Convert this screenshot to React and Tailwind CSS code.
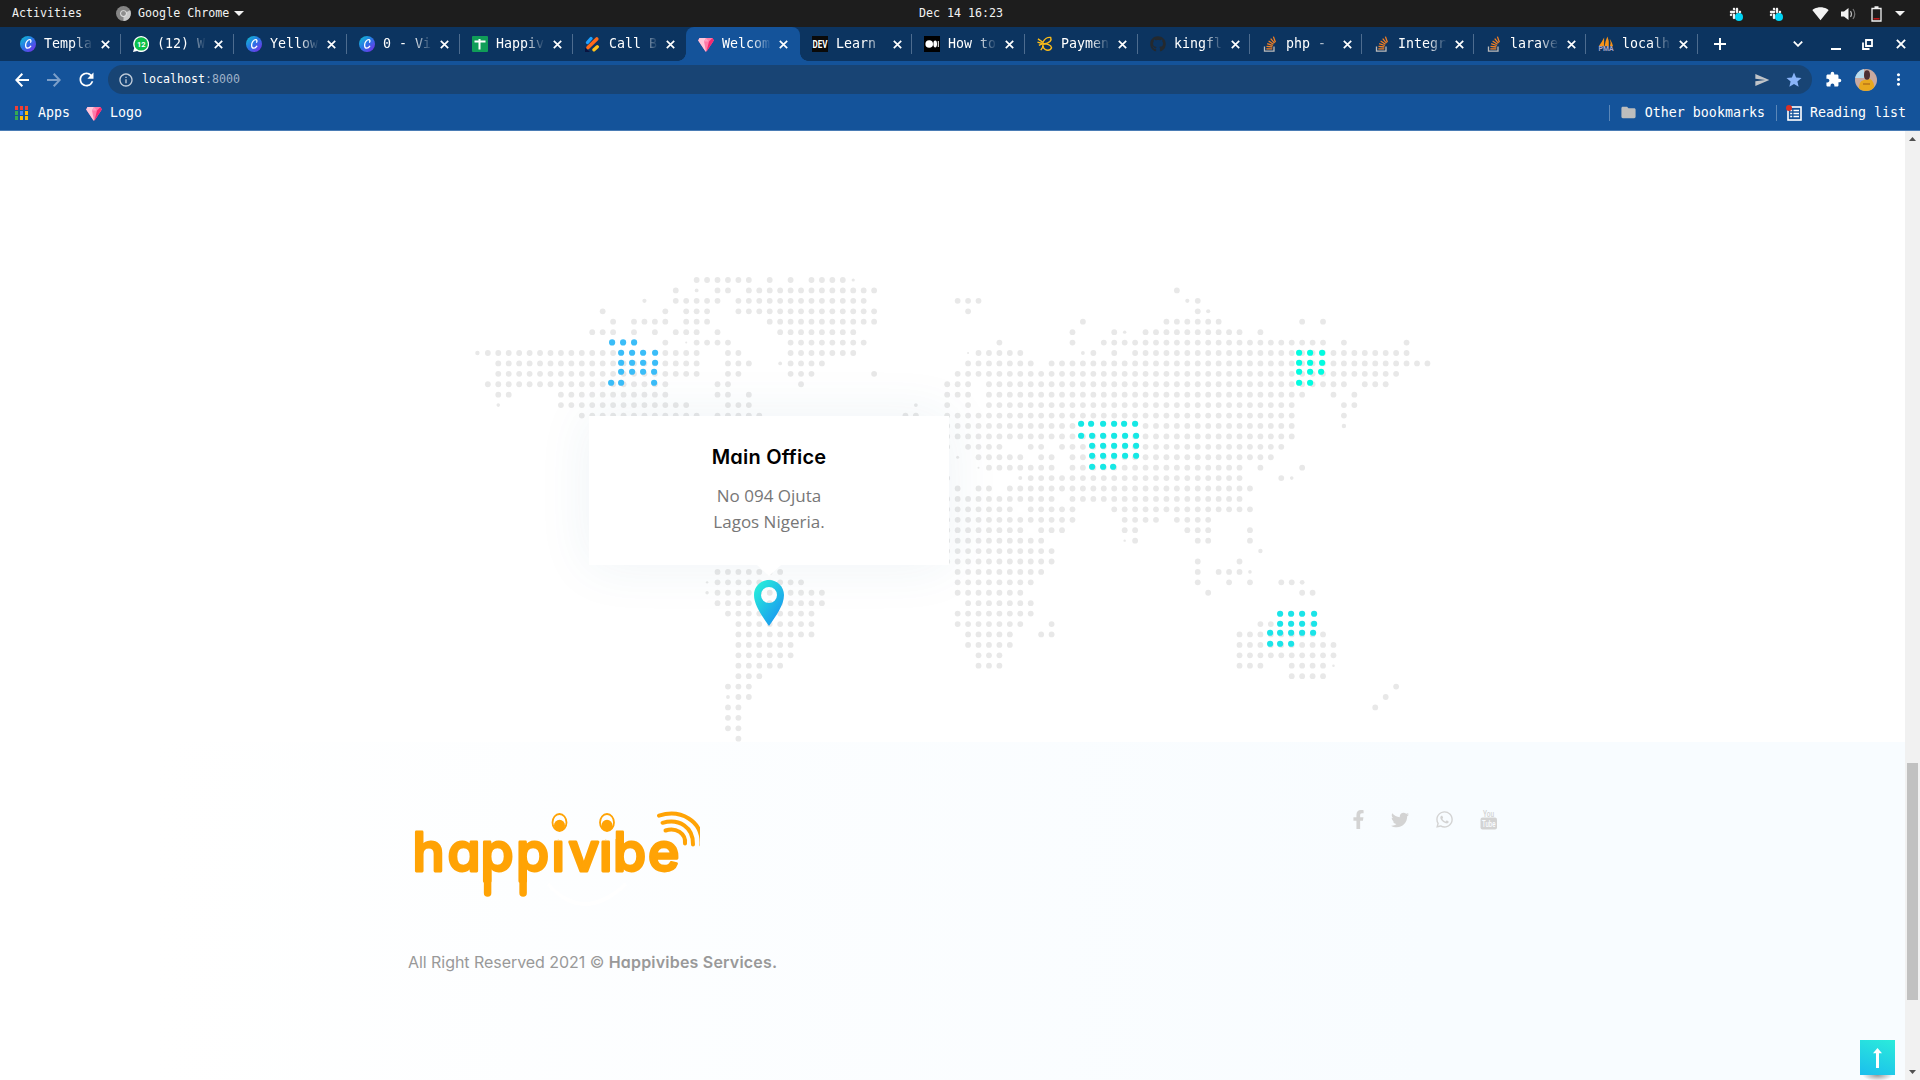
import React from "react";
import { FaFacebookF, FaTwitter, FaWhatsapp, FaGithub, FaSlack } from "react-icons/fa";
import { MdRefresh, MdInfoOutline, MdSend, MdStar, MdExtension, MdMoreVert, MdFolder, MdSignalWifi4Bar } from "react-icons/md";

const MONO = "font-['DejaVu_Sans_Mono',monospace]";

/* ---------- small line icons ---------- */
const Cross = ({ size = 9, className = "" }) => (
  <svg width={size} height={size} viewBox="0 0 9 9" className={`shrink-0 ${className}`} fill="none" stroke="#fff" strokeWidth="1.700">
    <path d="M0.800 0.800L8.200 8.200M8.200 0.800L0.800 8.200" />
  </svg>
);
const Arrow = ({ flip, color, className = "" }) => (
  <svg width="14" height="14" viewBox="0 0 14 14" className={`shrink-0 ${flip ? "-scale-x-100" : ""} ${className}`} fill="none" stroke={color} strokeWidth="2">
    <path d="M7.300 0.700L1.300 7l6 6.300M1.300 7H14" />
  </svg>
);

/* ---------- favicons ---------- */
const Canva = () => (
  <svg width="16" height="16" viewBox="0 0 16 16">
    <defs>
      <linearGradient id="canva" x1="0" y1="0" x2="0.9" y2="1">
        <stop offset="0" stopColor="#0cc7cf" />
        <stop offset="0.5" stopColor="#2a74e6" />
        <stop offset="1" stopColor="#7b2be8" />
      </linearGradient>
    </defs>
    <circle cx="8" cy="8" r="8" fill="url(#canva)" />
    <path d="M10.6 6.2c.6-1 .5-2.500-.8-2.500C7.700 3.700 5.600 6.500 5.600 9.200c0 1.900.9 3 2.200 3 1.300 0 2.300-.9 3-2" fill="none" stroke="#fff" strokeWidth="1.300" strokeLinecap="round" />
  </svg>
);
const Whats = () => (
  <svg width="16" height="16" viewBox="0 0 16 16">
    <path d="M0 16l1.200-4A8 8 0 1 1 4.200 15z" fill="#fff" />
    <circle cx="8.200" cy="7.900" r="6.700" fill="#0cc04a" />
    <text x="8.200" y="10.700" textAnchor="middle" fontSize="7.500" fontWeight="700" fill="#fff" fontFamily="Roboto, sans-serif">12</text>
  </svg>
);
const Sheets = () => (
  <svg width="16" height="16" viewBox="0 0 16 16">
    <rect width="16" height="16" rx="1" fill="#109d58" />
    <path d="M2.500 5.500h11M7.500 3v10.500" stroke="#fff" strokeWidth="2" />
  </svg>
);
const Slants = () => (
  <svg width="16" height="16" viewBox="0 0 16 16" strokeLinecap="round" fill="none">
    <path d="M0 11.500L5 16H0z" fill="#0a1440" />
    <path d="M2.500 6.500L6 2.500" stroke="#1ea0ff" strokeWidth="3.400" />
    <path d="M3 11.500L11.800 3" stroke="#ff6a1a" strokeWidth="3.600" />
    <path d="M9 13.800l3.300-3" stroke="#ffc21a" strokeWidth="3.400" />
  </svg>
);
const Gem = () => (
  <svg width="16" height="16" viewBox="0 0 16 16">
    <path d="M1.500 2h13l1.300 2.500L8.500 15.500h-1L.2 4.500z" fill="#ff7aa8" />
    <path d="M1.500 2H8L6 5.500 8 15.500h-.5L.2 4.500z" fill="#ffc6da" />
    <path d="M8 2L6 5.500h5z" fill="#ff9dc0" />
    <path d="M14.500 2l1.300 2.500L8.500 15.500 11 5.500z" fill="#f5296f" />
  </svg>
);
const Dev = () => (
  <svg width="16" height="16" viewBox="0 0 16 16">
    <rect width="16" height="16" fill="#0a0a0a" />
    <text x="8" y="11.600" textAnchor="middle" textLength="15" lengthAdjust="spacingAndGlyphs" fontSize="10" fontWeight="700" fill="#fff" fontFamily="Roboto, sans-serif">DEV</text>
  </svg>
);
const Medium = () => (
  <svg width="16" height="16" viewBox="0 0 16 16">
    <rect width="16" height="16" fill="#000" />
    <circle cx="5.200" cy="8" r="3.800" fill="#fff" />
    <ellipse cx="11.200" cy="8" rx="1.800" ry="3.400" fill="#fff" />
    <path d="M14.300 5v6" stroke="#fff" strokeWidth="1" />
  </svg>
);
const Bee = () => (
  <svg width="17" height="16" viewBox="0 0 17 16" fill="none" stroke="#fbbc1a" strokeWidth="1.500">
    <path d="M1 2.500l5 3.500M.5 6l5 1.500M4 14.500L7 10" />
    <path d="M6 7c1.500-4 5-6.500 8.500-6 1.500 3-1 6.500-7.500 7z" />
    <path d="M6.500 8c4-.5 8.500 1 9 4-1.500 3.500-6 4-9.500-1z" />
    <path d="M2 9.500l4-2" />
  </svg>
);
const Git = () => <FaGithub size={16} color="#24292e" />;
const Stack = () => (
  <svg width="16" height="16" viewBox="0 0 16 16" fill="none">
    <path d="M2.500 10.500v4.700h9.500v-4.700" stroke="#bcbbbb" strokeWidth="1.300" />
    <path d="M4.300 12.800h6M4.500 10.300l5.900.7M5.200 7.600l5.600 1.900M6.600 5l4.900 3.300M8.700 2.700l3.800 4.500M11.400.6l2 5.600" stroke="#f48024" strokeWidth="1.300" />
  </svg>
);
const Pma = () => (
  <svg width="17" height="16" viewBox="0 0 17 16">
    <path d="M6.500 1Q4 6 .8 10.500h5.700zM10 0Q7.500 5 7 10.500h4.500Q12 4 10 0zM12.500 2.500q1.500 4 .2 8h3.300q-1-4-3.500-8z" fill="#f7931a" />
    <text x="8.500" y="15.800" textAnchor="middle" textLength="16" lengthAdjust="spacingAndGlyphs" fontSize="7" fontWeight="700" fill="#a9a5cc" fontFamily="Roboto, sans-serif">PMA</text>
  </svg>
);

const TABS = [
  { t: "Templa", I: Canva, w: "w-[113px]" },
  { t: "(12) W", I: Whats, w: "w-[113px]" },
  { t: "Yellow", I: Canva, w: "w-[113px]" },
  { t: "0 - Vi", I: Canva, w: "w-[113px]" },
  { t: "Happiv", I: Sheets, w: "w-[113px]" },
  { t: "Call B", I: Slants, w: "w-[113px]", bare: true },
  { t: "Welcom", I: Gem, w: "w-[114px]", active: true, bare: true },
  { t: "Learn ", I: Dev, w: "w-[112px]" },
  { t: "How to", I: Medium, w: "w-[113px]" },
  { t: "Paymen", I: Bee, w: "w-[113px]" },
  { t: "kingfl", I: Git, w: "w-[112px]" },
  { t: "php - ", I: Stack, w: "w-[112px]" },
  { t: "Integr", I: Stack, w: "w-[112px]" },
  { t: "larave", I: Stack, w: "w-[112px]" },
  { t: "localh", I: Pma, w: "w-[112px]" },
];

function Tab({ t, I, w, active, bare }) {
  return (
    <div className={`relative flex h-[34px] shrink-0 items-center pl-3 ${w} ${active ? "rounded-t-lg bg-[#14539a]" : ""}`}>
      {active && <span className="absolute bottom-0 -left-2 size-2 bg-[radial-gradient(circle_at_0_0,#0c3460_7.5px,#14539a_8px)]" />}
      {active && <span className="absolute bottom-0 -right-2 size-2 bg-[radial-gradient(circle_at_100%_0,#0c3460_7.5px,#14539a_8px)]" />}
      <span className="flex w-4 shrink-0 justify-center"><I /></span>
      <span className="ml-2 w-[49px] shrink-0 whitespace-pre text-[13.3px] leading-5 text-white [mask-image:linear-gradient(to_right,#000_60%,transparent_100%)]">{t}</span>
      <Cross className="ml-[8px]" />
      {!bare && <span className="absolute right-0 top-[7px] h-5 w-px bg-[#4d6c8f]" />}
    </div>
  );
}

function Tray() {
  return (
    <div className="flex h-[27px] w-full items-center justify-end pr-[15px] text-[#f2f2f2]">
      {[0, 1].map((k) => (
        <span key={k} className="relative mr-[26px] h-[14px] w-[14px]">
          <FaSlack size={13} />
          <span className="absolute left-[6px] top-[6px] size-2 rounded-full bg-[#00d4f5]" />
        </span>
      ))}
      <MdSignalWifi4Bar size={17} className="ml-[3px] mr-[12px]" />
      <svg width="16" height="14" viewBox="0 0 16 14" className="mr-[14px]" fill="none">
        <path d="M0 4.500h3L7.500 1v12L3 9.500H0z" fill="#f2f2f2" />
        <path d="M9.500 4q2 3 0 6" stroke="#bbb" strokeWidth="1.200" />
        <path d="M12 2q3.500 5 0 10" stroke="#777" strokeWidth="1.200" />
      </svg>
      <svg width="11" height="16" viewBox="0 0 11 16" className="mr-[13px]" fill="none">
        <path d="M1 2.500h9v12.500H1zM3.500 1h4" stroke="#f2f2f2" strokeWidth="1.300" />
        <path d="M2.500 12.800h6" stroke="#d01818" strokeWidth="1.400" />
      </svg>
      <svg width="10" height="5" viewBox="0 0 10 5"><path d="M0 0h10L5 5z" fill="#f2f2f2" /></svg>
    </div>
  );
}

/* ---------- dotted world map ---------- */
/* each row: inclusive column runs */
const ROWS = [
  [[21, 26], [28], [30], [32, 35]],
  [[19], [23, 24], [26, 38], [67]],
  [[19, 23], [25, 37], [46, 48], [69]],
  [[12], [18], [20, 22], [25, 38], [47], [69]],
  [[13], [15, 18], [20, 22], [28, 38], [58], [66, 71], [79], [81]],
  [[11, 13], [15], [17], [19, 21], [23], [29, 36], [57], [61], [64, 73], [75]],
  [[18], [21, 24], [30, 37], [50], [57], [60, 81], [83], [89]],
  [[1, 13], [18, 21], [24, 25], [30, 36], [48, 52], [59], [61], [63, 89]],
  [[2, 21], [24, 26], [30, 33], [47, 53], [55, 91]],
  [[2, 21], [24, 25], [30, 32], [38], [46, 88]],
  [[1, 18], [23, 24], [31], [45, 47], [49, 83], [85, 87]],
  [[2, 3], [8, 18], [23, 24], [26], [45, 47], [49, 79], [82], [84]],
  [[8, 20], [24, 26], [45], [47], [49, 78], [83, 84]],
  [[10, 21], [23, 27], [41, 42], [45, 78], [83]],
  [[45, 57], [64, 78]],
  [[45, 78]],
  [[45], [47, 50], [53, 54], [56, 77]],
  [[48, 52], [54, 55], [57, 76]],
  [[49, 55], [57, 73], [75], [79]],
  [[45], [53, 73], [77]],
  [[46], [48, 49], [51, 74]],
  [[45, 55], [57, 73]],
  [[45, 51], [53, 57], [61, 74]],
  [[45, 57], [62, 65], [67, 70]],
  [[45, 52], [54, 56], [62, 63], [68, 70], [74]],
  [[45, 54], [63], [69, 70], [74]],
  [[45, 55]],
  [[45, 55], [69], [73]],
  [[23, 29], [46, 54], [69], [71, 73]],
  [[23, 31], [46, 53], [69], [72], [74], [77, 78]],
  [[23, 33], [46, 52], [70], [79, 80]],
  [[23, 33], [47, 53]],
  [[24, 32], [46, 53]],
  [[25, 32], [46, 52], [55], [75, 76], [80]],
  [[25, 32], [47, 51], [54, 55], [73, 81]],
  [[25, 30], [47, 51], [73, 82]],
  [[25, 30], [48, 50], [73, 82]],
  [[25, 29], [48, 50], [73, 75], [78, 81]],
  [[25, 27], [78, 81]],
  [[24, 26], [88]],
  [[25, 26], [87]],
  [[24, 25], [86]],
  [[24, 25]],
  [[24, 25]],
  [[25]],
];
/* small dots: [column, row, radius] */
const SMALL = [
  [36, 0, 1.6], [21, 1, 1.9], [16, 2, 2.1], [68, 2, 2.1], [70, 3, 2.1], [62, 5, 1.7], [20, 6, 1], [0, 7, 2.2],
  [47, 7, 1], [58, 7, 1.9], [29, 8, 1.9], [2, 12, 1.8], [42, 12, 1.9], [83, 14, 2.2], [46, 17, 1.5], [48, 18, 1],
  [52, 19, 2], [78, 19, 1.8], [62, 25, 1.2], [75, 26, 2.2], [74, 28, 1.8], [22, 29, 1.2], [79, 29, 2.4],
  [22, 30, 1.7], [82, 37, 1.3], [24, 40, 1.9],
];
const PX = 10.44, PY = 10.425, X0 = 477.4, Y0 = 149;

const GROUPS = [
  { c: "#3bbdf8", ox: 460, oy: 129, rows: [[247, [456, 489, 522]], [278, [483, 516, 549, 585]], [308, [483, 516, 549, 585]], [335, [483, 516, 549, 582]], [368, [453, 483, 582]]] },
  { c: "#16e8e5", ox: 880, oy: 129, rows: [[491, [603, 633, 669, 702, 732, 765]], [527, [603, 636, 669, 702, 735, 768]], [557, [636, 669, 702, 735, 768]], [587, [636, 669, 702, 735, 768]], [620, [636, 669, 699]]] },
  { c: "#02fce0", ox: 1160, oy: 139, rows: [[248, [417, 450, 486]], [278, [417, 450, 486]], [305, [417, 450, 483]], [338, [417, 450]]] },
  { c: "#1be4e8", ox: 1160, oy: 409, rows: [[221, [360, 393, 426, 462]], [251, [360, 393, 426, 462]], [278, [330, 360, 393, 426, 459]], [311, [330, 360, 393]]] },
];

function WorldMap() {
  const dots = [];
  ROWS.forEach((runs, r) =>
    runs.forEach(([a, b = a]) => {
      for (let c = a; c <= b; c++) dots.push([c, r, 2.9]);
    })
  );
  return (
    <svg className="block" width="1905" height="611" viewBox="0 0 1905 611">
      <g fill="#e8e8e8">
        {dots.concat(SMALL).map(([c, r, s]) => (
          <circle key={`${c}-${r}`} cx={X0 + c * PX} cy={Y0 + r * PY} r={s} />
        ))}
      </g>
      {GROUPS.map((g) => (
        <g key={g.c} fill={g.c}>
          {g.rows.map(([y, xs]) => xs.map((x) => <circle key={`${x}-${y}`} cx={g.ox + x / 3 + 0.1} cy={g.oy + y / 3 + 0.1} r="3.1" />))}
        </g>
      ))}
    </svg>
  );
}

function Pin() {
  return (
    <svg width="30" height="46" viewBox="0 0 30 46">
      <defs>
        <linearGradient id="pin" x1="0.1" y1="0.1" x2="0.8" y2="0.9">
          <stop offset="0" stopColor="#27ecdb" />
          <stop offset="1" stopColor="#1a98f0" />
        </linearGradient>
      </defs>
      <path fill="url(#pin)" fillRule="evenodd" d="M15 0C6.700 0 0 6.700 0 15c0 10 8 21 15 31 7-10 15-21 15-31C30 6.700 23.300 0 15 0zM15 7a8 8 0 1 1 0 16 8 8 0 0 1 0-16z" />
    </svg>
  );
}

function Logo() {
  return (
    <svg width="300" height="100" viewBox="0 0 300 100" className="-ml-[8px] block">
      <defs>
        <mask id="stems" maskUnits="userSpaceOnUse" x="0" y="0" width="300" height="100">
          <rect width="300" height="100" fill="#fff" />
          <rect x="147" y="0" width="24" height="28" fill="#000" />
          <rect x="198" y="0" width="17.500" height="28" fill="#000" />
        </mask>
      </defs>
      <text
        x="12.500 47.500 80.500 116 151.500 168.500 199 213 248" y="59.800" mask="url(#stems)"
        fill="#ffa305" stroke="#ffa305" strokeWidth="2.800" strokeLinejoin="round"
        fontSize="53.500" fontWeight="500" fontFamily="Inter, sans-serif" style={{ fontFeatureSettings: '"cv11"' }}
      >happivibe</text>
      <path d="M87.600 60V82M123.100 60V82" stroke="#ffa305" strokeWidth="7.500" strokeLinecap="round" />
      {[159.5, 207].map((x) => (
        <g key={x}>
          <ellipse cx={x} cy="11.500" rx="7" ry="8.500" fill="none" stroke="#ffa305" strokeWidth="1.800" />
          <ellipse cx={x} cy="14.500" rx="5.500" ry="5.800" fill="#ffa305" />
        </g>
      ))}
      <g fill="none" stroke="#ffa305" strokeWidth="4" strokeLinecap="round">
        <path d="M259 4.700C280-2 303 9 301.500 34" />
        <path d="M262.500 11.800C279 7 293.500 16 293 33.500" />
        <path d="M265.500 19.500C276 16 286 22.500 285 32.500" />
      </g>
      <path d="M148 73q35 40 78 0" fill="none" stroke="#fff" strokeWidth="4" />
    </svg>
  );
}

function YouTube() {
  return (
    <svg width="18" height="21" viewBox="0 0 18 21">
      <text x="8.500" y="7.500" textAnchor="middle" textLength="11" lengthAdjust="spacingAndGlyphs" fontSize="9.500" fontWeight="500" fill="#d3d3d3" fontFamily="Roboto, sans-serif">You</text>
      <rect x="0.500" y="8.500" width="16.500" height="12" rx="2" fill="#d3d3d3" />
      <text x="8.800" y="18" textAnchor="middle" textLength="13.500" lengthAdjust="spacingAndGlyphs" fontSize="9.500" fontWeight="500" fill="#f9fcff" fontFamily="Roboto, sans-serif">Tube</text>
    </svg>
  );
}

export default function App() {
  return (
    <div className={`flex h-[1080px] w-[1920px] flex-col overflow-hidden bg-white ${MONO}`}>
      {/* desktop bar */}
      <div className="grid h-[27px] shrink-0 grid-cols-3 items-center bg-[#1d1d1d] text-[11.65px] text-[#f2f2f2]">
        <div className="flex items-center pl-3">
          <span>Activities</span>
          <svg width="15" height="15" viewBox="0 0 16 16" className="ml-[34px] mr-[7px]">
            <circle cx="8" cy="8" r="8" fill="#858585" />
            <path d="M8 8L15 4.500A8 8 0 0 1 8 16z" fill="#c9c9c9" />
            <circle cx="8" cy="8" r="3.600" fill="#e0e0e0" />
            <circle cx="8" cy="8" r="2.600" fill="#8e8e8e" />
          </svg>
          <span>Google Chrome</span>
          <svg width="10" height="5" viewBox="0 0 10 5" className="ml-[5px]"><path d="M0 0h10L5 5z" fill="#f2f2f2" /></svg>
        </div>
        <span className="pl-[2px] text-center">Dec 14 16:23</span>
        <Tray />
      </div>

      {/* tab strip */}
      <div className="flex h-[34px] shrink-0 items-center bg-[#0c3460] pl-2 text-white">
        {TABS.map((t, i) => <Tab key={i} {...t} />)}
        <svg width="12" height="12" viewBox="0 0 12 12" className="ml-[16px] shrink-0" stroke="#fff" strokeWidth="2"><path d="M6 0v12M0 6h12" /></svg>
        <svg width="10" height="6" viewBox="0 0 10 6" className="ml-[67px] shrink-0" fill="none" stroke="#fff" strokeWidth="1.800"><path d="M0.800 0.600L5 4.800 9.200 0.600" /></svg>
        <span className="ml-[28px] mt-[9px] h-[2px] w-[10px] bg-white" />
        <svg width="11" height="11" viewBox="0 0 11 11" className="ml-[21px]" fill="none" stroke="#fff" strokeWidth="1.800">
          <path d="M4 1h6v6H4zM1 3.500V10h6.500" />
        </svg>
        <Cross size={10} className="ml-[23px]" />
      </div>

      {/* toolbar */}
      <div className="flex h-[37px] shrink-0 items-center bg-[#14539a] pl-[15px] text-white">
        <Arrow color="#fff" />
        <Arrow flip color="#7c9fc9" className="ml-[18px]" />
        <MdRefresh size={21} className="ml-[15px]" />
        <div className="ml-[11px] flex h-[29px] w-[1704px] items-center rounded-full bg-[#184474] pl-[10px] pr-[9px]">
          <MdInfoOutline size={16} className="text-[#c3cedb]" />
          <span className="ml-2 text-[11.65px] text-white">localhost<span className="text-[#9fb2c8]">:8000</span></span>
          <MdSend size={16} className="ml-auto mr-[15px] text-[#c0c4c8]" />
          <MdStar size={18} className="text-[#8ab4f8]" />
        </div>
        <MdExtension size={17} className="ml-[13px]" />
        <svg width="22" height="22" viewBox="0 0 22 22" className="ml-[13px]">
          <defs><clipPath id="av"><circle cx="11" cy="11" r="11" /></clipPath></defs>
          <g clipPath="url(#av)">
            <rect width="22" height="22" fill="#c9a9a0" />
            <path d="M0 0h9v9H0z" fill="#b8dcef" />
            <path d="M4 22q-1-10 5-11l6-1q5 2 4 12z" fill="#e8a81e" />
            <ellipse cx="12" cy="6" rx="3" ry="4.800" fill="#4c3033" />
            <path d="M8 15h7" stroke="#b87418" strokeWidth="1.500" />
          </g>
        </svg>
        <MdMoreVert size={19} className="ml-[12px]" />
      </div>

      {/* bookmarks */}
      <div className="flex h-[33px] shrink-0 items-center border-b border-[#4a7cb5] bg-[#14539a] pb-[3px] pl-[15px] text-[13.3px] text-white">
        <div className="grid grid-cols-3 gap-x-[2px] gap-y-px">
          {["bg-[#ee4035]", "bg-[#ee4035]", "bg-[#ee4035]", "bg-[#35a853]", "bg-[#4285f4]", "bg-[#fbbc05]", "bg-[#35a853]", "bg-[#fbbc05]", "bg-[#fbbc05]"].map((c, i) => (
            <span key={i} className={`h-[4px] w-[3px] ${c}`} />
          ))}
        </div>
        <span className="ml-[10px] mr-4">Apps</span>
        <Gem />
        <span className="ml-2">Logo</span>
        <span className="ml-auto h-4 w-px bg-[#5b87b8]" />
        <MdFolder size={17} className="ml-[10px] text-[#bdbdbd]" />
        <span className="ml-2 mr-[11px]">Other bookmarks</span>
        <span className="h-4 w-px bg-[#5b87b8]" />
        <svg width="16" height="16" viewBox="0 0 16 16" className="ml-[9px]" fill="none" stroke="#fff">
          <rect x="2" y="2" width="13" height="13" strokeWidth="1.600" />
          <path d="M4.200 5.500h2M4.200 8.500h2M4.200 11.500h2M7.500 5.500H13M7.500 8.500H13M7.500 11.500H13" strokeWidth="1.500" />
          <circle cx="3" cy="3" r="3" fill="#d93025" stroke="none" />
        </svg>
        <span className="ml-2 mr-[14px]">Reading list</span>
      </div>

      {/* page */}
      <div className="flex min-h-0 flex-1">
        <div className="relative w-[1905px] overflow-hidden">
          <section className="relative h-[611px]">
            <WorldMap />
            <div className="absolute left-[589px] top-[285px] flex h-[149px] w-[360px] flex-col items-center bg-white pt-[26px] shadow-[0_0_54px_rgba(40,100,140,0.08)]">
              <h4 className="font-['Inter',sans-serif] text-[20px] font-semibold leading-[30px] tracking-[0.2px] text-black [font-feature-settings:'cv11']">Main Office</h4>
              <p className="mt-[11px] text-center font-['Open_Sans',sans-serif] text-[17px] leading-[26px] text-[#777]">No 094 Ojuta<br />Lagos Nigeria.</p>
              <svg className="absolute left-[168px] top-[149px]" width="24" height="11" viewBox="0 0 24 11"><path d="M0 0h24L12 11z" fill="#fff" /></svg>
              <div className="absolute left-[165px] top-[164px]"><Pin /></div>
            </div>
          </section>
          <footer className="flex h-[338px] justify-between bg-[linear-gradient(to_right,#ffffff_8%,#f8fcff_75%)] pl-[408px] pr-[407px]">
            <div className="pt-[69px]">
              <Logo />
              <p className="mt-[39px] whitespace-nowrap font-['Inter',sans-serif] text-[16px] leading-6 tracking-[-0.05px] text-[#999] [font-feature-settings:'cv11']">
                All Right Reserved 2021 © <span className="font-semibold tracking-[0.2px]">Happivibes Services.</span>
              </p>
            </div>
            <div className="mt-[67px] flex h-[21px] items-center text-[#d3d3d3]">
              <FaFacebookF size={19} />
              <FaTwitter size={18} className="ml-[23px]" />
              <FaWhatsapp size={19} className="ml-[26px]" />
              <span className="ml-[26px]"><YouTube /></span>
            </div>
          </footer>
          <div className="absolute bottom-[-1px] left-[1862px] h-[6px] w-[31px] bg-[radial-gradient(ellipse_at_50%_0,#999_0%,transparent_70%)]" />
          <button className="absolute left-[1860px] top-[909px] flex size-[35px] items-center justify-center bg-[linear-gradient(20deg,#1bbeed,#2becdb)]">
            <svg width="9" height="20" viewBox="0 0 9 20"><path d="M4.500 0L9 5.300H6V20H3V5.300H0z" fill="#fff" /></svg>
          </button>
        </div>
        <div className="flex w-[15px] flex-col items-center bg-[#f1f1f1]">
          <svg width="7" height="4" viewBox="0 0 7 4" className="mt-[6px]"><path d="M0 4h7L3.500 0z" fill="#505050" /></svg>
          <div className="mt-[622px] h-[237px] w-[11px] bg-[#c1c1c1]" />
          <svg width="7" height="4" viewBox="0 0 7 4" className="mb-[6px] mt-auto"><path d="M0 0h7L3.500 4z" fill="#505050" /></svg>
        </div>
      </div>
    </div>
  );
}
